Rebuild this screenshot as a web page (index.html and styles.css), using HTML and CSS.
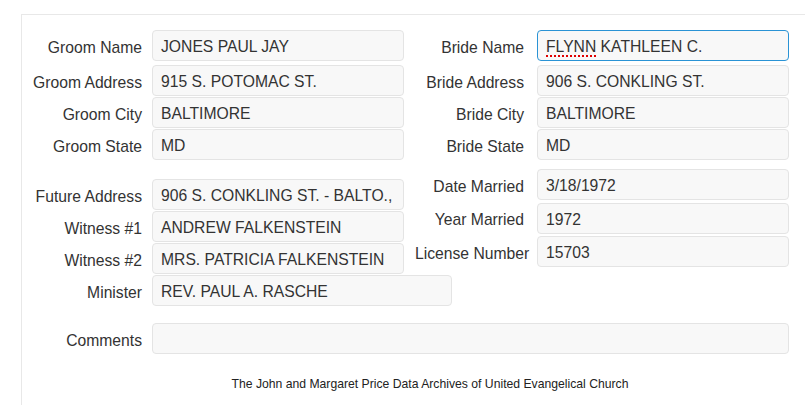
FILE: index.html
```html
<!DOCTYPE html>
<html>
<head>
<meta charset="utf-8">
<link rel="stylesheet" href="styles.css">
</head>
<body>
<div class="panel">
  <div class="section first">
    <div class="col">
      <div class="row"><div class="lbl">Groom Name</div><div class="fld">JONES PAUL JAY</div></div>
      <div class="row"><div class="lbl">Groom Address</div><div class="fld">915 S. POTOMAC ST.</div></div>
      <div class="row"><div class="lbl">Groom City</div><div class="fld">BALTIMORE</div></div>
      <div class="row"><div class="lbl">Groom State</div><div class="fld">MD</div></div>
    </div>
    <div class="col right">
      <div class="row"><div class="lbl">Bride Name</div><div class="fld focus"><span class="spell">FLYNN</span> KATHLEEN C.</div></div>
      <div class="row"><div class="lbl">Bride Address</div><div class="fld">906 S. CONKLING ST.</div></div>
      <div class="row"><div class="lbl">Bride City</div><div class="fld">BALTIMORE</div></div>
      <div class="row"><div class="lbl">Bride State</div><div class="fld">MD</div></div>
    </div>
  </div>
  <div class="section second">
    <div class="col lower-left">
      <div class="row"><div class="lbl">Future Address</div><div class="fld">906 S. CONKLING ST. - BALTO.,</div></div>
      <div class="row"><div class="lbl">Witness #1</div><div class="fld">ANDREW FALKENSTEIN</div></div>
      <div class="row"><div class="lbl">Witness #2</div><div class="fld">MRS. PATRICIA FALKENSTEIN</div></div>
      <div class="row"><div class="lbl">Minister</div><div class="fld wide">REV. PAUL A. RASCHE</div></div>
    </div>
    <div class="col right lower-right">
      <div class="row"><div class="lbl">Date Married</div><div class="fld">3/18/1972</div></div>
      <div class="row"><div class="lbl">Year Married</div><div class="fld">1972</div></div>
      <div class="row"><div class="lbl">License Number</div><div class="fld">15703</div></div>
    </div>
  </div>
  <div class="row comments"><div class="lbl">Comments</div><div class="fld full"></div></div>
  <div class="footer">The John and Margaret Price Data Archives of United Evangelical Church</div>
</div>
</body>
</html>
```
FILE: styles.css
```css
html, body {
  margin: 0;
  padding: 0;
  overflow: hidden;
  background: #fff;
}
body {
  font-family: "Liberation Sans", Arial, sans-serif;
  font-size: 15.7px;
  color: #333;
}
.panel {
  margin: 14px 0 0 21px;
  border-top: 1px solid #e8e8e8;
  border-left: 1px solid #e8e8e8;
  padding: 15px 0 20px 10px;
  width: 796px;
}
.section {
  display: flex;
  align-items: flex-start;
}
.col {
  flex: 0 0 372px;
  width: 372px;
  display: flex;
  flex-direction: column;
  gap: 1px;
}
.first .col .row:first-child {
  margin-bottom: 3px;
}
.col.right {
  margin-left: 11px;
}
.second .lower-left {
  margin-top: 19px;
}
.second .lower-right {
  margin-top: 9px;
  gap: 2.5px;
}
.row {
  display: flex;
  align-items: center;
}
.lbl {
  flex: 0 0 auto;
  width: 110px;
  text-align: right;
  white-space: nowrap;
  padding-top: 4px;
  box-sizing: border-box;
}
.right .lbl {
  width: 109px;
}
.fld {
  flex: 0 0 auto;
  box-sizing: border-box;
  height: 31px;
  width: 252px;
  margin-left: 10px;
  padding: 2px 8px 0;
  line-height: 28px;
  background: #f8f8f8;
  border: 1px solid #e4e4e4;
  border-radius: 4px;
  white-space: nowrap;
  overflow: hidden;
}
.right .fld {
  margin-left: 13px;
}
.fld.focus {
  border-color: #2a93d5;
}
.spell {
  text-decoration: underline dotted #e00000;
  text-decoration-thickness: 2px;
  text-underline-offset: 3px;
}
.fld.wide {
  width: 300px;
}
.comments {
  margin-top: 17px;
}
.fld.full {
  width: 637px;
}
.footer {
  margin-top: 23px;
  text-align: center;
  font-size: 12.2px;
  color: #222;
}
```
